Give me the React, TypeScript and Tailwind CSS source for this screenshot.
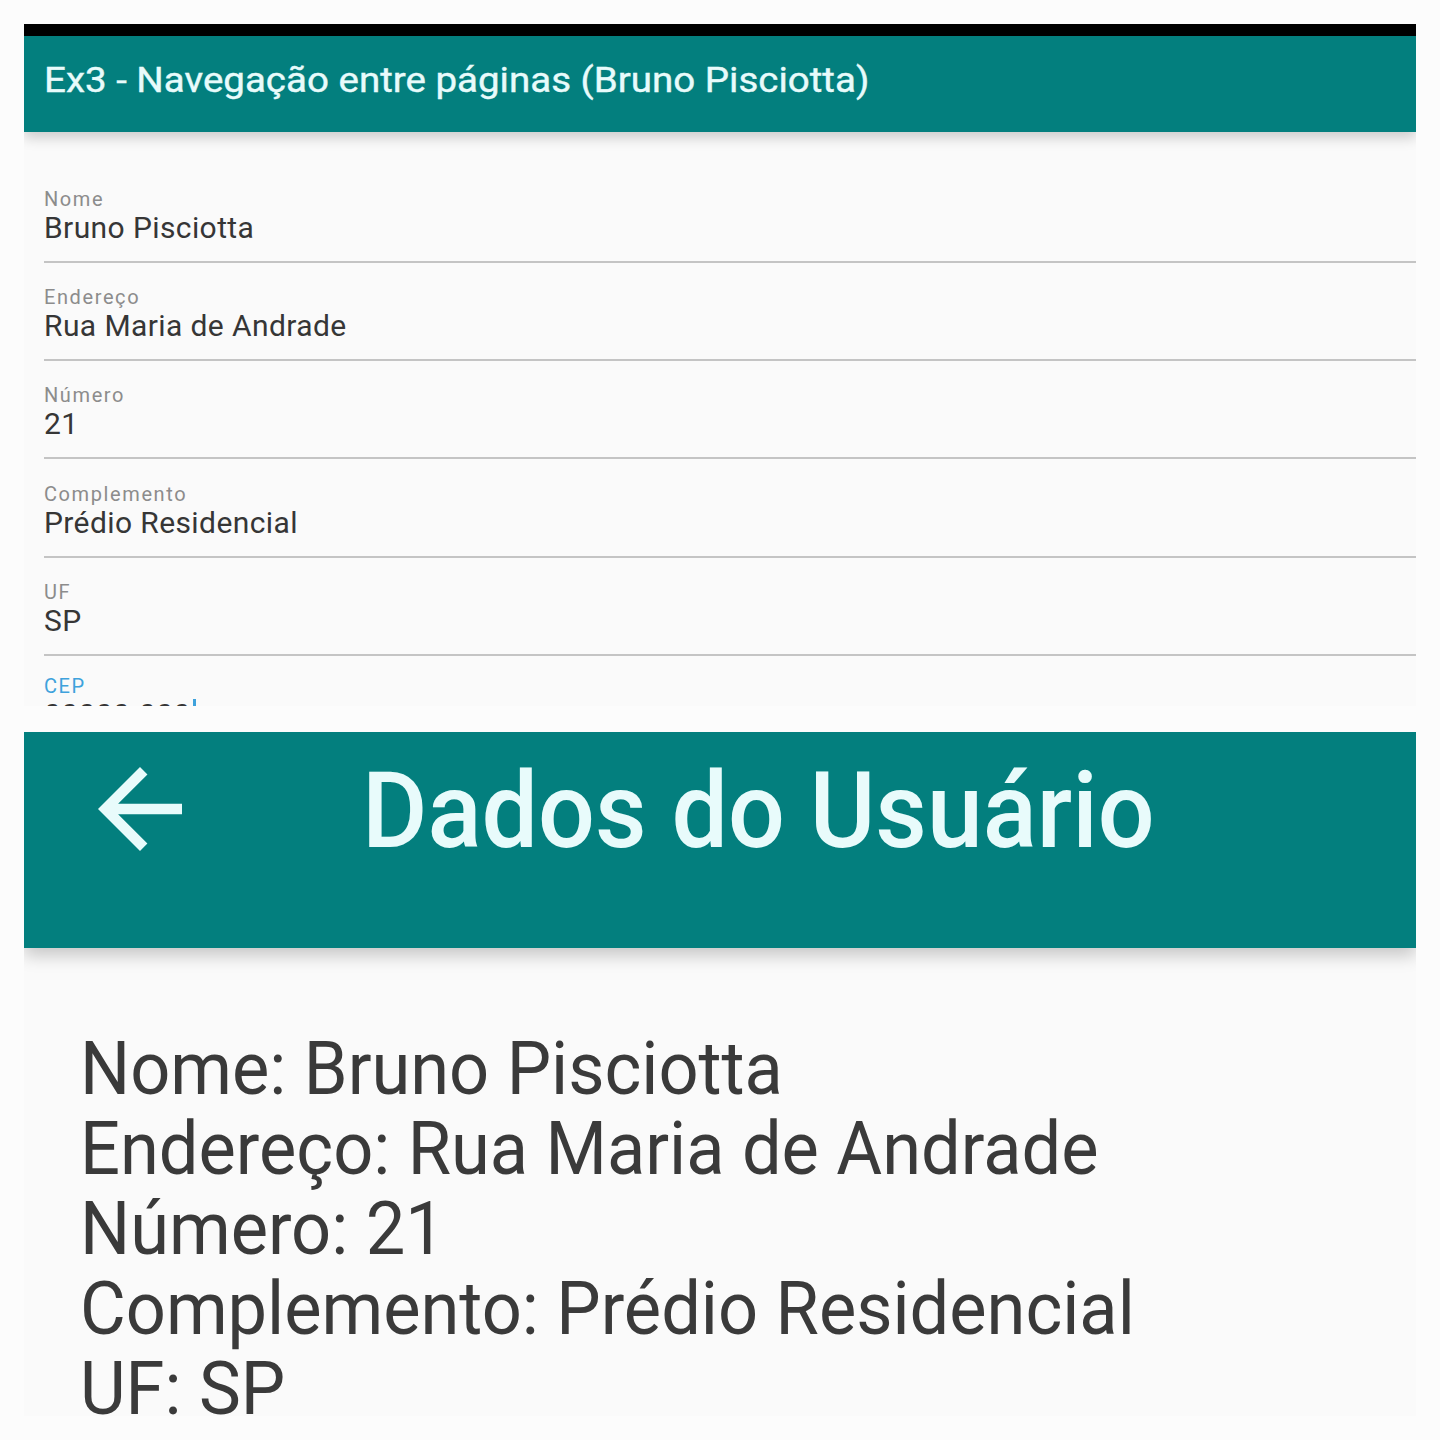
import React from "react";

const fields = [
  { label: "Nome", value: "Bruno Pisciotta" },
  { label: "Endereço", value: "Rua Maria de Andrade" },
  { label: "Número", value: "21" },
  { label: "Complemento", value: "Prédio Residencial" },
  { label: "UF", value: "SP" },
];

const lines = [
  "Nome: Bruno Pisciotta",
  "Endereço: Rua Maria de Andrade",
  "Número: 21",
  "Complemento: Prédio Residencial",
  "UF: SP",
];

export default function App() {
  return (
    <div
      className="min-h-screen w-full bg-[#fcfcfc] p-[24px] flex flex-col gap-[26px]"
      style={{ fontFamily: "Roboto, 'Noto Sans', sans-serif" }}
    >
      {/* Top screen */}
      <div className="h-[682px] w-full overflow-hidden bg-[#fafafa] flex flex-col">
        <div className="h-[12px] bg-black shrink-0" />
        <div className="h-[96px] shrink-0 bg-[#037f7e] flex items-start pl-[20px] pt-[26.5px] relative z-10 shadow-[0_6px_12px_rgba(0,0,0,0.18)]">
          <span className="inline-block origin-left scale-x-[1.1] text-[35px] leading-[35px] text-[#e8fbfb] whitespace-nowrap [-webkit-text-stroke:0.4px_#e8fbfb]">
            Ex3 - Navegação entre páginas (Bruno Pisciotta)
          </span>
        </div>
        <div className="pl-[20px] pt-[55.5px] flex flex-col">
          {fields.map((f) => (
            <div key={f.label} className="flex flex-col">
              <div className="text-[20px] leading-[22px] tracking-[1.6px] text-[#8c8c8c]">{f.label}</div>
              <div className="text-[30px] leading-[36px] tracking-[0.4px] text-[#363636]">{f.value}</div>
              <div className="mt-[15px] h-[2px] bg-[#c4c4c4]" />
              <div className="h-[23.4px]" />
            </div>
          ))}
          <div className="flex flex-col -mt-[4px]">
            <div className="text-[20px] leading-[22px] tracking-[1.6px] text-[#3ea2dc]">CEP</div>
            <div className="text-[30px] leading-[36px] tracking-[0.4px] text-[#363636] flex items-center">
              00000-000
              <span className="ml-[2px] inline-block w-[3px] h-[32px] bg-[#3ea2dc]" />
            </div>
          </div>
        </div>
      </div>

      {/* Bottom screen */}
      <div className="h-[684px] w-full overflow-hidden bg-[#fafafa] flex flex-col">
        <div className="h-[216px] shrink-0 bg-[#037f7e] relative z-10 shadow-[0_8px_16px_rgba(0,0,0,0.2)] flex items-start">
          <div className="ml-[53px] mt-[14px] w-[126px] h-[126px] shrink-0">
            <svg viewBox="0 0 24 24" width="126" height="126" fill="#e8fbfb">
              <path d="M20 11H7.83l5.59-5.59L12 4l-8 8 8 8 1.41-1.41L7.83 13H20v-2z" />
            </svg>
          </div>
          <div className="ml-[159px] mt-[20px] text-[105px] leading-[120px] text-[#e8fbfb] font-medium whitespace-nowrap origin-left scale-x-[0.955]">
            Dados do Usuário
          </div>
        </div>
        <div className="pl-[56px] pt-[80px] flex flex-col">
          {lines.map((l) => (
            <div
              key={l}
              className="text-[75px] leading-[80px] text-[#3a3a3a] whitespace-nowrap origin-left scale-x-[0.938]"
            >
              {l}
            </div>
          ))}
        </div>
      </div>
    </div>
  );
}
